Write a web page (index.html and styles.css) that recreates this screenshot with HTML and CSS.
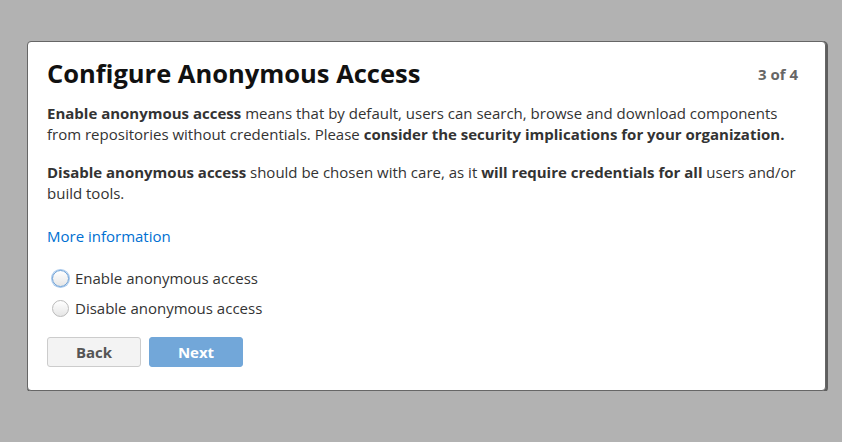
FILE: index.html
```html
<!DOCTYPE html>
<html>
<head>
<meta charset="utf-8">
<link rel="stylesheet" href="styles.css">
</head>
<body>
<div class="page">
  <div class="dialog">
    <div class="header">
      <h1 class="title">Configure Anonymous Access</h1>
      <div class="step">3 of 4</div>
    </div>
    <p class="para"><b>Enable anonymous access</b> means that by default, users can search, browse and download components from repositories without credentials. Please <b>consider the security implications for your organization.</b></p>
    <p class="para"><b>Disable anonymous access</b> should be chosen with care, as it <b>will require credentials for all</b> users and/or build tools.</p>
    <a class="more" href="#">More information</a>
    <div class="options">
      <label class="option"><span class="radio focused"></span>Enable anonymous access</label>
      <label class="option"><span class="radio"></span>Disable anonymous access</label>
    </div>
    <div class="buttons">
      <button class="btn back">Back</button>
      <button class="btn next">Next</button>
    </div>
  </div>
</div>
</body>
</html>
```
FILE: styles.css
```css
html, body {
  margin: 0;
  padding: 0;
  background: #b2b2b2;
  font-family: "Open Sans", "Lato", sans-serif;
  color: #333;
}
.page {
  padding: 41px 0 0 27px;
}
.dialog {
  box-sizing: border-box;
  width: 799px;
  height: 350px;
  background: #fff;
  border: 1px solid #666;
  border-radius: 4px;
  box-shadow: 1px 1px 0 1px #5e5e5e;
  padding: 13px 27px 0 19px;
}
.header {
  display: flex;
  justify-content: space-between;
  align-items: flex-start;
}
.title {
  margin: 0;
  font-size: 25.5px;
  font-weight: 700;
  color: #111;
  line-height: 36px;
}
.step {
  font-size: 15px;
  font-weight: 700;
  color: #666;
  padding-top: 9px;
}
.para {
  margin: 12px 0 17px;
  font-size: 15px;
  line-height: 21px;
}
.para + .para { margin-top: 0; margin-bottom: 16px; }
.para b { font-weight: 700; }
.more {
  display: block;
  margin-top: 22px;
  font-size: 15px;
  color: #0070d2;
  text-decoration: none;
  line-height: 21px;
}
.options {
  margin-top: 21px;
  display: flex;
  flex-direction: column;
  gap: 9px;
}
.option {
  display: flex;
  align-items: center;
  gap: 6px;
  font-size: 15px;
  line-height: 21px;
  padding-left: 5px;
}
.radio {
  width: 15px;
  height: 15px;
  border-radius: 50%;
  border: 1px solid #bbb;
  background: linear-gradient(#fff, #e6e6e6);
}
.radio.focused {
  border-color: #6a9fd6;
  box-shadow: 0 0 0 1px #a9c9ec;
}
.buttons {
  margin-top: 18px;
  display: flex;
  gap: 8px;
}
.btn {
  width: 94px;
  height: 30px;
  border-radius: 3px;
  font-family: inherit;
  font-size: 15px;
  font-weight: 700;
}
.back {
  background: #f3f3f3;
  border: 1px solid #ccc;
  color: #555;
}
.next {
  background: #72a7d9;
  border: 1px solid #72a7d9;
  color: #fff;
}
```
